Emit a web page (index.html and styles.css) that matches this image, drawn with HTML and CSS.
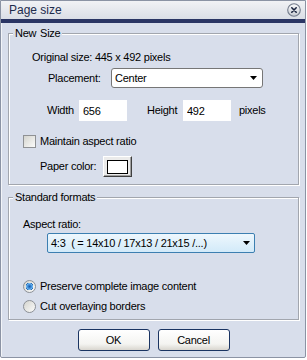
FILE: index.html
```html
<!DOCTYPE html>
<html lang="en">
<head>
    <meta charset="UTF-8">
    <title>Page size</title>
    <link rel="stylesheet" href="styles.css">
</head>
<body>
    <div class="window">
        <div class="titlebar">
            <span class="title">Page size</span>
            <span class="close">
                <svg width="14" height="14" viewBox="0 0 14 14">
                    <defs>
                        <linearGradient id="closeFill" x1="0" y1="0" x2="0" y2="1">
                            <stop offset="0" stop-color="#fbfbfc"/>
                            <stop offset="1" stop-color="#c6cad2"/>
                        </linearGradient>
                    </defs>
                    <circle cx="7" cy="7" r="6.3" fill="url(#closeFill)" stroke="#737b8b" stroke-width="1.1"/>
                    <path d="M4.8 4.8 L9.2 9.2 M9.2 4.8 L4.8 9.2" stroke="#1c2640" stroke-width="1.6" stroke-linecap="round"/>
                </svg>
            </span>
        </div>

        <div class="content">
            <fieldset class="group group-size">
                <legend class="legend-size">New Size</legend>
                <div class="orig">Original size: 445 x 492 pixels</div>

                <div class="row row-place">
                    <span class="place-label">Placement:</span>
                    <div class="combo combo-place">
                        <span>Center</span>
                        <svg class="arrow" width="7" height="4" viewBox="0 0 7 4"><path d="M0 0 H7 L3.5 4 Z" fill="#000"/></svg>
                    </div>
                </div>

                <div class="row row-dims">
                    <label class="w-label" for="width">Width</label>
                    <input class="num" type="text" id="width" value="656">
                    <label class="h-label" for="height">Height</label>
                    <input class="num" type="text" id="height" value="492">
                    <span class="unit">pixels</span>
                </div>

                <div class="row row-check">
                    <span class="check"></span>
                    <span>Maintain aspect ratio</span>
                </div>

                <div class="row row-paper">
                    <span class="paper-label">Paper color:</span>
                    <button class="swatch-btn"><span class="swatch"></span></button>
                </div>
            </fieldset>

            <fieldset class="group group-std">
                <legend>Standard formats</legend>
                <div class="aspect-label">Aspect ratio:</div>
                <div class="combo combo-aspect">
                    <span class="aspect-text">4:3  ( = 14x10 / 17x13 / 21x15 /...)</span>
                    <svg class="arrow" width="7" height="4" viewBox="0 0 7 4"><path d="M0 0 H7 L3.5 4 Z" fill="#000"/></svg>
                </div>

                <div class="row row-radio first">
                    <span class="radio checked"></span>
                    <span>Preserve complete image content</span>
                </div>
                <div class="row row-radio">
                    <span class="radio"></span>
                    <span>Cut overlaying borders</span>
                </div>
            </fieldset>

            <div class="buttons">
                <button class="btn">OK</button>
                <button class="btn">Cancel</button>
            </div>
        </div>
    </div>
</body>
</html>
```

FILE: styles.css
```css
body {
    margin: 0;
    background: #fff;
    font-family: "Liberation Sans", Arial, sans-serif;
    font-size: 11px;
    line-height: 13px;
    letter-spacing: -0.25px;
    color: #000;
}

.window {
    width: 306px;
    height: 358px;
    box-sizing: border-box;
    border: 1px solid #8b93a4;
    border-radius: 0 0 2px 2px;
    background: #d8deeb;
    box-shadow: inset 1px 0 0 #f2f4f8;
}

.titlebar {
    height: 18px;
    border-bottom: 4px solid #2a3564;
    background: linear-gradient(#f1f2f5, #dadee6);
    display: flex;
    align-items: center;
    justify-content: space-between;
    padding: 0 4px 0 8px;
}

.title {
    font-size: 12px;
    letter-spacing: 0;
    color: #1d2b4c;
}

.close {
    display: flex;
}

.content {
    padding: 4px 6px 0 7px;
}

.group {
    margin: 0;
    padding: 0;
    min-width: 0;
    border: 1px solid #a2a6ae;
    box-shadow: inset 1px 1px 0 #fff, 1px 1px 0 #fff;
}

.group legend {
    margin-left: 4px;
    padding: 0 2px;
    line-height: 13px;
    background: #d8deeb;
}

.legend-size {
    word-spacing: 1px;
}

.group-size {
    padding-bottom: 7px;
    margin-bottom: 6px;
}

.group-std {
    padding-bottom: 6px;
}

.row {
    display: flex;
    align-items: center;
}

.orig {
    margin: 11px 0 0 23px;
}

.row-place {
    height: 20px;
    margin: 4px 0 0 39px;
}

.place-label {
    width: 63px;
}

.combo {
    box-sizing: border-box;
    height: 20px;
    border: 1px solid #767676;
    border-radius: 3px;
    background: #fff;
    display: flex;
    align-items: center;
    justify-content: space-between;
    padding: 0 5px 0 3px;
}

.combo-place {
    width: 152px;
}

.row-dims {
    height: 21px;
    margin: 12px 0 0 38px;
}

.w-label {
    width: 32px;
}

.h-label {
    width: 36px;
    margin-left: 20px;
}

.num {
    box-sizing: border-box;
    width: 48px;
    height: 21px;
    margin: 0;
    padding: 0 3px;
    border: 1px solid #fff;
    background: #fff;
    font: inherit;
    letter-spacing: inherit;
    color: #000;
}

.unit {
    margin-left: 8px;
}

.row-check {
    height: 13px;
    margin: 14px 0 0 14px;
}

.check {
    width: 13px;
    height: 13px;
    box-sizing: border-box;
    margin-right: 4px;
    border: 1px solid #8f9194;
    background: linear-gradient(135deg, #d4d4ce, #fbfbfa);
}

.row-paper {
    height: 21px;
    margin: 8px 0 0 31px;
}

.paper-label {
    width: 63px;
}

.swatch-btn {
    width: 29px;
    height: 21px;
    box-sizing: border-box;
    margin: 0;
    padding: 0;
    border: 1px solid;
    border-color: #fff #404040 #404040 #fff;
    box-shadow: inset -1px -1px 0 #a0a0a0;
    background: #ebebeb;
    display: flex;
    align-items: center;
    justify-content: center;
}

.swatch {
    width: 21px;
    height: 14px;
    box-sizing: border-box;
    border: 1px solid #000;
    background: #fff;
}

.aspect-label {
    margin: 14px 0 0 14px;
}

.combo-aspect {
    width: 208px;
    margin: 2px 0 0 38px;
    padding-right: 4px;
    border-color: #3c7fb1;
    border-radius: 2px;
    background: linear-gradient(#eef7fd, #d2eaf9);
}

.aspect-text {
    white-space: pre;
}

.row-radio {
    height: 13px;
    margin: 7px 0 0 14px;
}

.row-radio.first {
    margin-top: 27px;
}

.radio {
    width: 13px;
    height: 13px;
    box-sizing: border-box;
    margin-right: 4px;
    border: 1px solid #8c9096;
    border-radius: 50%;
    background: linear-gradient(135deg, #d4d4ce, #fbfbfa);
}

.radio.checked {
    background: radial-gradient(circle at 50% 50%, #1c5aa8 0, #3f8fdc 2px, #78bdf2 3px, #2d6cb5 3.6px, transparent 4px), linear-gradient(135deg, #d4d4ce, #fbfbfa);
}

.buttons {
    display: flex;
    justify-content: center;
    gap: 8px;
    margin-top: 9px;
}

.btn {
    width: 72px;
    height: 22px;
    box-sizing: border-box;
    margin: 0;
    padding: 0;
    border: 1px solid #1a3462;
    border-radius: 3px;
    background: linear-gradient(#fff, #f4f4f1 70%, #d9d6cf);
    font: inherit;
    letter-spacing: inherit;
    color: #000;
}
```
